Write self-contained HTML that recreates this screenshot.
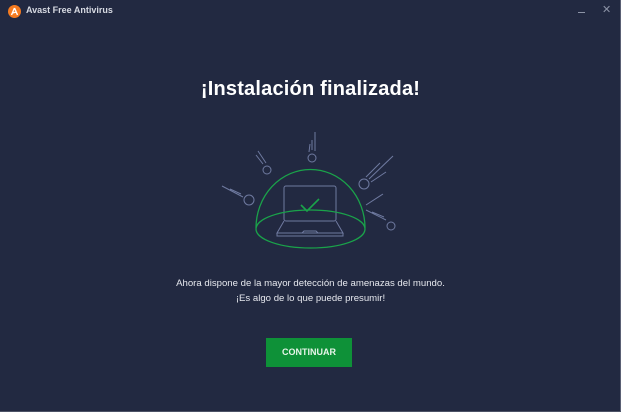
<!DOCTYPE html>
<html><head><meta charset="utf-8"><style>
html,body{margin:0;padding:0}
body{width:621px;height:412px;background:#222941;position:relative;overflow:hidden;font-family:"Liberation Sans",sans-serif;color:#fff}
.logo{position:absolute;left:8px;top:5px;width:13px;height:13px;border-radius:50%;background:#f57b20}
.t{position:absolute;left:26px;top:5px;font-size:9px;color:#d7dae2;font-weight:bold}
.min{position:absolute;left:578px;top:12px;width:7px;height:1px;background:#8c93a6}
.x{position:absolute;left:602px;top:3px;font-size:11px;color:#8c93a6}
h1{position:absolute;left:0;width:621px;top:78px;margin:0;text-align:center;font-size:20px;font-weight:bold;letter-spacing:0.2px}
.p{position:absolute;left:0;width:621px;text-align:center;font-size:9.6px;color:#e6e8ee}
.btn{position:absolute;left:266px;top:338px;width:86px;height:29px;background:#0e9138;color:#e8f5ea;font-size:9px;font-weight:bold;text-align:center;line-height:29px}
.edge{position:absolute;right:0;top:0;width:1px;height:412px;background:#5a6074}
.edgeb{position:absolute;left:0;bottom:0;width:621px;height:1px;background:#4c5266}
</style></head><body>
<div class="logo"></div><svg style="position:absolute;left:10px;top:7px" width="9" height="9" viewBox="0 0 9 9"><path d="M4.5 1 L1.5 8 M4.5 1 L7.5 8 M2.5 6 L6.5 5" stroke="#fff" stroke-width="1.4" fill="none"/></svg>
<div class="t">Avast Free Antivirus</div>
<div class="min"></div><div class="x">✕</div>
<h1>¡Instalación finalizada!</h1>
<svg style="position:absolute;left:0;top:0" width="621" height="412" viewBox="0 0 621 412">
<g fill="none" stroke="#6f7aa0" stroke-width="1">
<rect x="284" y="186" width="52" height="35" rx="2"/>
<path d="M284 221 L277 233 L343 233 L336 221 M277 233 L277 236 L343 236 L343 233 M302 233 L304 231 L316 231 L318 233"/>
<circle cx="312" cy="158" r="4"/><circle cx="267" cy="170" r="4"/><circle cx="249" cy="200" r="5"/><circle cx="364" cy="184" r="5"/><circle cx="391" cy="226" r="4"/>
<path d="M312 150 L312 140 M315 151 L315 132 M309 152 L310 144"/>
<path d="M263 164 L256 155 M266 163 L258 151"/>
<path d="M243 197 L222 186 M241 194 L230 189"/>
<path d="M369 179 L393 156 M371 182 L386 172 M366 177 L380 163"/>
<path d="M386 220 L366 210 M384 217 L372 212 M366 205 L383 194"/>
</g>
<path d="M256 228 A54 58 0 0 1 365 228" fill="none" stroke="#1aa34a" stroke-width="1.3"/>
<ellipse cx="310.5" cy="229" rx="54.5" ry="19" fill="none" stroke="#1aa34a" stroke-width="1.3"/>
<path d="M301 205 L307 211 L319 199" fill="none" stroke="#1aa34a" stroke-width="1.6"/>
</svg>
<div class="p" style="top:278px">Ahora dispone de la mayor detección de amenazas del mundo.</div>
<div class="p" style="top:293px">¡Es algo de lo que puede presumir!</div>
<div class="btn">CONTINUAR</div>
<div class="edge"></div><div class="edgeb"></div>
</body></html>
